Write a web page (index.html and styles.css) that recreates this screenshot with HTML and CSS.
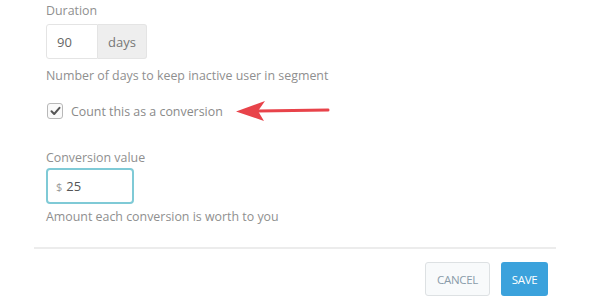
FILE: index.html
```html
<!DOCTYPE html>
<html>
<head>
<meta charset="utf-8">
<link rel="stylesheet" href="styles.css">
</head>
<body>
<div class="panel">
  <div class="form">
    <div class="label">Duration</div>
    <div class="input-group">
      <div class="input num">90</div>
      <div class="addon">days</div>
    </div>
    <div class="help">Number of days to keep inactive user in segment</div>

    <div class="check-row">
      <span class="checkbox">
        <svg width="11" height="10" viewBox="0 0 11 10"><path d="M1.5 5.2 L4.2 8 L9.5 1.8" fill="none" stroke="#555" stroke-width="2" stroke-linecap="round" stroke-linejoin="round"/></svg>
      </span>
      <span class="check-label">Count this as a conversion</span>
      <svg class="arrow" width="94" height="22" viewBox="0 0 94 22"><path d="M22 11 L92 10" stroke="#e8434a" stroke-width="3" stroke-linecap="round"/><path d="M0 11.5 L29 1 L22 11 L28 21 Z" fill="#e8434a"/></svg>
    </div>

    <div class="label label2">Conversion value</div>
    <div class="input money"><span class="cur">$</span>25</div>
    <div class="help help2">Amount each conversion is worth to you</div>
  </div>
  <div class="footer">
    <button class="btn cancel">CANCEL</button>
    <button class="btn save">SAVE</button>
  </div>
</div>
</body>
</html>
```
FILE: styles.css
```css
html, body { margin: 0; padding: 0; background: #fff; }
body { font-family: "Open Sans", "Liberation Sans", sans-serif; color: #8a8a8a; font-size: 12.4px; width: 600px; height: 308px; overflow: hidden; }
.panel { padding: 0 44px 0 34px; }
.form { padding-left: 12px; }
.label { line-height: 18px; padding-top: 2px; color: #8f8f8f; }
.input-group { display: flex; margin-top: 4px; height: 35px; width: 101px; }
.input { box-sizing: border-box; border: 1px solid #e4e4e4; background: #fff; color: #666; display: flex; align-items: center; }
.num { width: 52px; border-radius: 3px 0 0 3px; padding-left: 10px; font-size: 13px; }
.addon { box-sizing: border-box; width: 49px; background: #eeeeee; border: 1px solid #e4e4e4; border-left: none; border-radius: 0 3px 3px 0; display: flex; align-items: center; justify-content: center; color: #777; font-size: 13px; }
.help { margin-top: 8px; line-height: 18px; color: #8f8f8f; }
.check-row { display: flex; align-items: center; margin-top: 15px; height: 22px; }
.checkbox { box-sizing: border-box; width: 16px; height: 16px; border: 1px solid #b8b8b8; border-radius: 3px; margin-left: 1px; display: flex; align-items: center; justify-content: center; background: #fafafa; }
.check-label { margin-left: 8px; color: #8a8a8a; }
.arrow { margin-left: 13px; }
.label2 { margin-top: 25px; }
.money { width: 88px; height: 36px; margin-top: 1px; border: 2px solid #7fcad6; border-radius: 4px; padding-left: 8px; color: #555; font-size: 13px; }
.cur { color: #999; font-size: 11px; margin-right: 4px; }
.help2 { margin-top: 4px; }
.footer { margin-top: 21px; border-top: 2px solid #ececec; display: flex; justify-content: flex-end; gap: 11px; padding-top: 13px; padding-right: 8px; }
.btn { font-family: "Open Sans", "Liberation Sans", sans-serif; font-size: 11.5px; letter-spacing: -0.3px; height: 34px; border-radius: 3px; cursor: pointer; }
.cancel { width: 65px; background: #f8fafb; border: 1px solid #dde1e3; color: #8a9caa; }
.save { width: 47px; background: #3ba2dc; border: none; color: #fff; }
```
